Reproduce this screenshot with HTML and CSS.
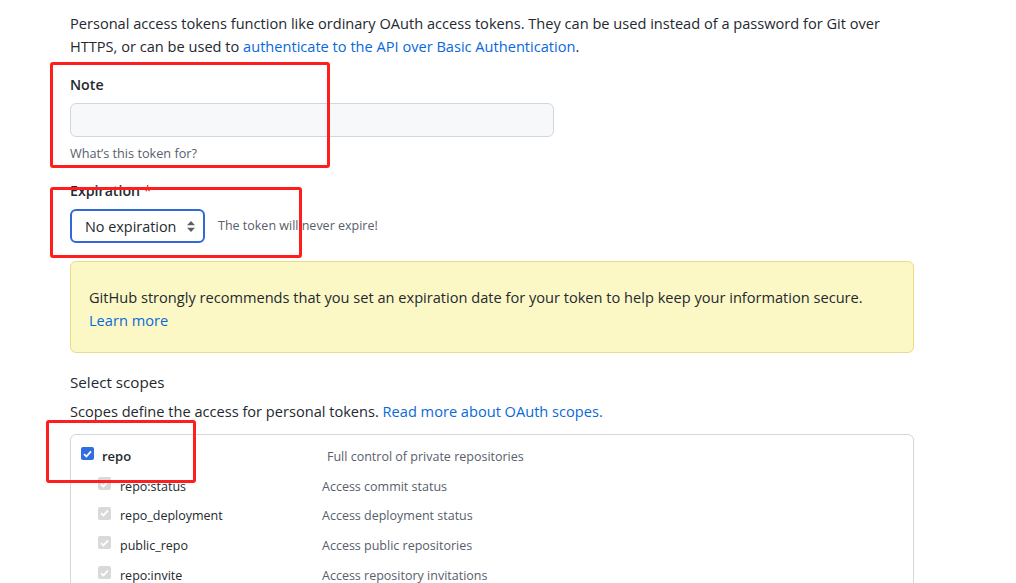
FILE: index.html
```html
<!DOCTYPE html>
<html lang="en">
<head>
<meta charset="utf-8">
<title>New personal access token</title>
<link rel="stylesheet" href="styles.css">
</head>
<body>
<div class="page">
  <p class="intro">Personal access tokens function like ordinary OAuth access tokens. They can be used instead of a password for Git over HTTPS, or can be used to <a href="#">authenticate to the API over Basic Authentication</a>.</p>

  <div class="field">
    <label class="field-label">Note</label>
    <input class="text-input" type="text">
    <p class="hint">What’s this token for?</p>
  </div>

  <div class="field field-exp">
    <label class="field-label">Expiration <span class="req">*</span></label>
    <div class="exp-row">
      <div class="select">
        <span>No expiration</span>
        <svg class="select-arrow" width="8" height="11" viewBox="0 0 8 11"><path d="M4 0 L8 4.2 H0 Z M4 11 L0 6.8 H8 Z" fill="#57606a"/></svg>
      </div>
      <span class="hint exp-hint">The token will never expire!</span>
    </div>
  </div>

  <div class="flash">
    GitHub strongly recommends that you set an expiration date for your token to help keep your information secure.<br>
    <a href="#">Learn more</a>
  </div>

  <h3 class="scopes-title">Select scopes</h3>
  <p class="scopes-desc">Scopes define the access for personal tokens. <a href="#">Read more about OAuth scopes.</a></p>

  <div class="scopes-box">
    <div class="scope-row scope-main">
      <span class="cb cb-on"><svg width="9" height="8" viewBox="0 0 9 8"><path d="M1 4.2 L3.4 6.5 L8 1.3" stroke="#fff" stroke-width="1.8" fill="none"/></svg></span>
      <span class="scope-name">repo</span>
      <span class="scope-desc">Full control of private repositories</span>
    </div>
    <div class="scope-row scope-sub">
      <span class="cb cb-dis"><svg width="9" height="8" viewBox="0 0 9 8"><path d="M1 4.2 L3.4 6.5 L8 1.3" stroke="#fff" stroke-width="1.8" fill="none"/></svg></span>
      <span class="scope-name">repo:status</span>
      <span class="scope-desc">Access commit status</span>
    </div>
    <div class="scope-row scope-sub">
      <span class="cb cb-dis"><svg width="9" height="8" viewBox="0 0 9 8"><path d="M1 4.2 L3.4 6.5 L8 1.3" stroke="#fff" stroke-width="1.8" fill="none"/></svg></span>
      <span class="scope-name">repo_deployment</span>
      <span class="scope-desc">Access deployment status</span>
    </div>
    <div class="scope-row scope-sub">
      <span class="cb cb-dis"><svg width="9" height="8" viewBox="0 0 9 8"><path d="M1 4.2 L3.4 6.5 L8 1.3" stroke="#fff" stroke-width="1.8" fill="none"/></svg></span>
      <span class="scope-name">public_repo</span>
      <span class="scope-desc">Access public repositories</span>
    </div>
    <div class="scope-row scope-sub">
      <span class="cb cb-dis"><svg width="9" height="8" viewBox="0 0 9 8"><path d="M1 4.2 L3.4 6.5 L8 1.3" stroke="#fff" stroke-width="1.8" fill="none"/></svg></span>
      <span class="scope-name">repo:invite</span>
      <span class="scope-desc">Access repository invitations</span>
    </div>
  </div>
</div>

<div class="mark mark-note"></div>
<div class="mark mark-exp"></div>
<div class="mark mark-repo"></div>
</body>
</html>
```

FILE: styles.css
```css
html, body {
  margin: 0;
  padding: 0;
  background: #ffffff;
}
body {
  font-family: "Open Sans", "Noto Sans", sans-serif;
  font-size: 14.6px;
  color: #24292f;
  overflow: hidden;
  height: 583px;
  position: relative;
}
a {
  color: #0969da;
  text-decoration: none;
}
.page {
  width: 844px;
  padding-left: 70px;
}
.intro {
  margin: 12px 0 0;
  line-height: 23px;
}
.field {
  display: flex;
  flex-direction: column;
  align-items: flex-start;
  margin-top: 17px;
}
.field-label {
  font-weight: 600;
  font-size: 14.2px;
  line-height: 20px;
}
.text-input {
  box-sizing: border-box;
  margin-top: 8px;
  width: 484px;
  height: 34px;
  background: #f6f8fa;
  border: 1px solid #d0d7de;
  border-radius: 6px;
}
.hint {
  margin: 7px 0 0;
  font-size: 12.7px;
  line-height: 18px;
  color: #57606a;
}
.field-exp {
  margin-top: 19px;
}
.req {
  color: #cf222e;
  font-weight: 400;
}
.exp-row {
  display: flex;
  align-items: center;
  gap: 13px;
  margin-top: 8px;
}
.select {
  box-sizing: border-box;
  width: 135px;
  height: 34px;
  border: 2px solid #3268d7;
  border-radius: 6px;
  display: flex;
  align-items: center;
  justify-content: space-between;
  padding: 0 8px 0 13px;
  font-size: 14.4px;
}
.exp-hint {
  margin: 0;
  font-size: 12.5px;
}
.flash {
  margin-top: 18px;
  box-sizing: border-box;
  height: 92px;
  padding: 24px 18px 0;
  background: #fcf8c6;
  border: 1px solid #ecd98c;
  border-radius: 6px;
  line-height: 23px;
}
.scopes-title {
  margin: 19px 0 0;
  font-size: 15.2px;
  font-weight: 400;
  line-height: 20px;
}
.scopes-desc {
  margin: 9px 0 0;
  line-height: 20px;
}
.scopes-box {
  margin-top: 13px;
  border: 1px solid #d0d7de;
  border-radius: 6px;
  padding-top: 12px;
  height: 200px;
  font-size: 12.5px;
}
.scope-row {
  display: flex;
  align-items: center;
  line-height: 19.7px;
  padding: 5px 0;
}
.scope-main {
  padding: 0 0 5px 10px;
}
.scope-sub {
  padding-left: 27px;
}
.cb {
  box-sizing: border-box;
  width: 13px;
  height: 13px;
  border-radius: 2px;
  display: inline-flex;
  align-items: center;
  justify-content: center;
  flex: none;
  margin-top: -6px;
}
.cb-on {
  background: #2f6de1;
}
.cb-dis {
  background: #d9d9d9;
}
.scope-name {
  flex: none;
}
.scope-main .cb {
  margin-right: 8px;
}
.scope-main .scope-name {
  width: 225px;
  font-weight: 600;
  font-size: 13px;
}
.scope-sub .cb {
  margin-right: 9px;
}
.scope-sub .scope-name {
  width: 202px;
}
.scope-desc {
  color: #57606a;
}
.mark {
  position: absolute;
  box-sizing: border-box;
  border: 3px solid #ff1e1e;
  border-radius: 3px;
}
.mark-note {
  left: 50px;
  top: 62px;
  width: 280px;
  height: 106px;
}
.mark-exp {
  left: 50px;
  top: 187px;
  width: 252px;
  height: 71px;
}
.mark-repo {
  left: 46px;
  top: 420px;
  width: 150px;
  height: 63px;
}
```
